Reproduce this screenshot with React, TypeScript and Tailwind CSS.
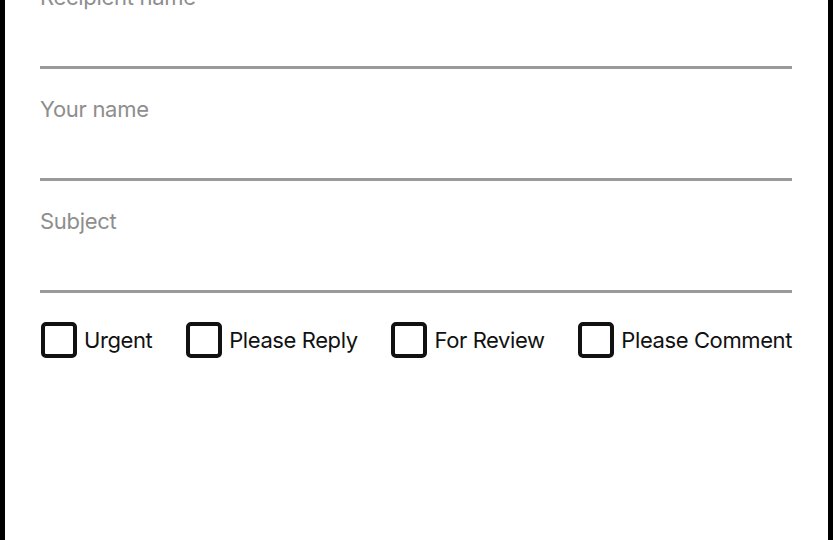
import { useState } from "react";

const fields = ["Recipient name", "Your name", "Subject"];
const flags = ["Urgent", "Please Reply", "For Review", "Please Comment"];

function Field({ label }: { label: string }) {
  return (
    <label className="block mb-6">
      <span className="block text-[22px] leading-[33px] text-[#8e8e8e] tracking-[-0.3px]">{label}</span>
      <input
        type="text"
        className="block w-full h-[55px] border-b-[3px] border-[#9a9a9a] bg-transparent outline-none text-[22px]"
      />
    </label>
  );
}

export default function App() {
  const [checked, setChecked] = useState<Record<string, boolean>>({});

  return (
    <div
      className="min-h-[540px] bg-white border-x-[5px] border-black overflow-hidden"
      style={{ fontFamily: "Inter, 'Noto Sans', sans-serif" }}
    >
      <div className="-mt-[19px] pl-[35px] pr-[36px]">
        {fields.map((f) => (
          <Field key={f} label={f} />
        ))}

        <div className="flex items-center justify-between pt-[5px]">
          {flags.map((flag) => (
            <label key={flag} className="flex items-center gap-[7px] cursor-pointer">
              <input
                type="checkbox"
                checked={!!checked[flag]}
                onChange={() => setChecked((c) => ({ ...c, [flag]: !c[flag] }))}
                className="ml-px appearance-none w-9 h-9 border-4 border-[#111] rounded-[5px] bg-white checked:bg-[#111]"
              />
              <span className="text-[22px] text-[#111] tracking-[-0.4px]">{flag}</span>
            </label>
          ))}
        </div>
      </div>
    </div>
  );
}
